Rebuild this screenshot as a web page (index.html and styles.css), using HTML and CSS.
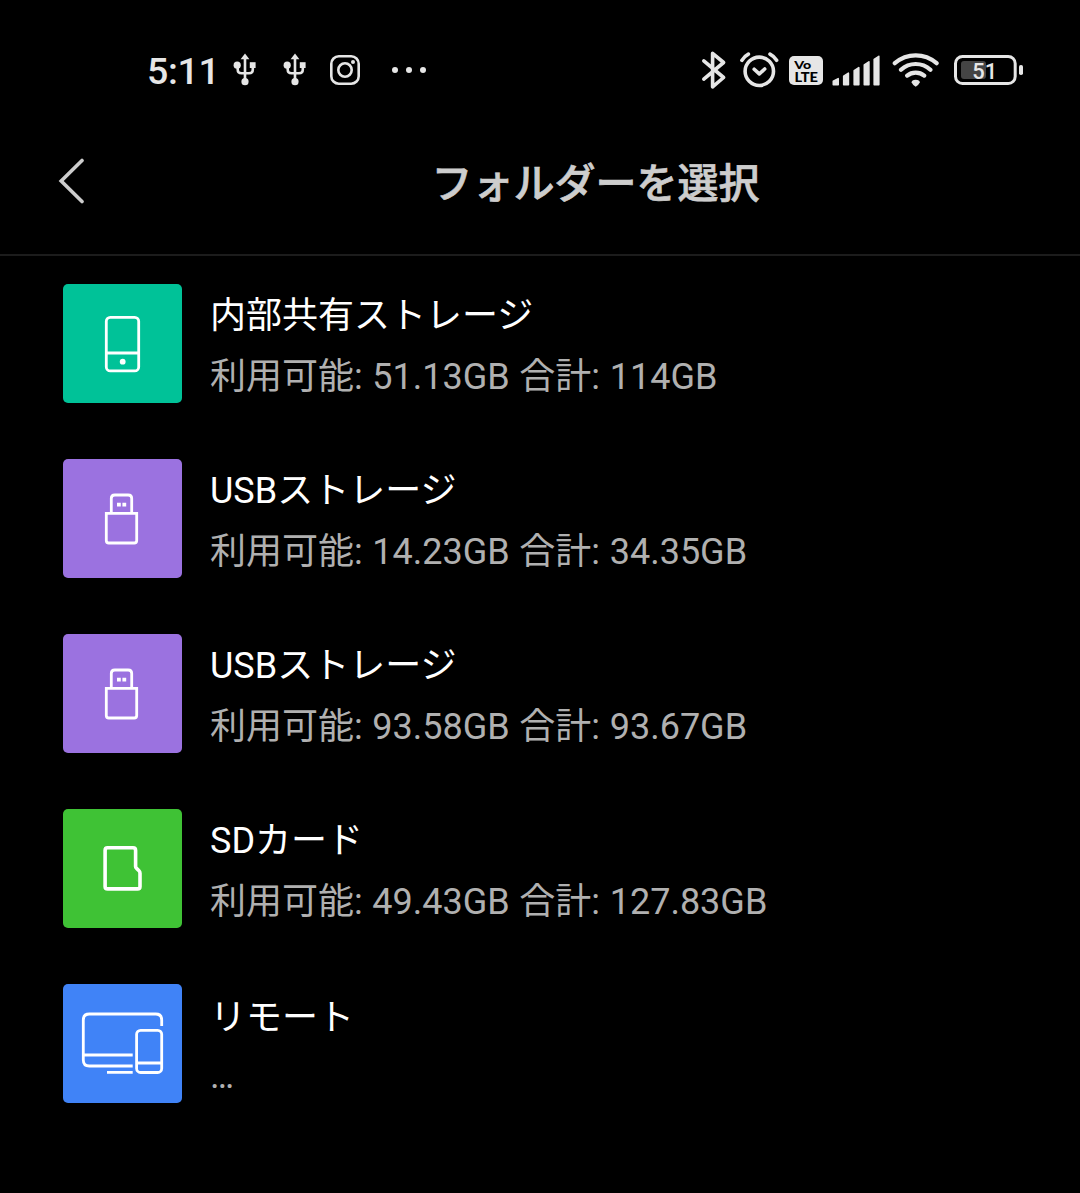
FILE: index.html
```html
<!DOCTYPE html>
<html lang="ja">
<head>
    <meta charset="UTF-8">
    <meta name="viewport" content="width=device-width, initial-scale=1.0">
    <title>フォルダーを選択</title>
    <link rel="stylesheet" href="styles.css">
</head>
<body>

<div class="status-bar">
    <span class="time">5:11</span>
    <div class="notifications">
        <svg class="usb" width="24" height="40" viewBox="0 0 24 40">
            <path class="solid" d="M12 3.6L16.4 9.3H7.6Z"/>
            <path class="line" d="M12 7V31M4.7 15V19.5Q4.7 23.3 8.5 23.3H16Q19.8 23.3 19.8 19.5V15"/>
            <circle class="solid" cx="4.2" cy="15.2" r="3.6"/>
            <rect class="solid" x="16.8" y="12.2" width="5.8" height="5.8"/>
            <circle class="solid" cx="12" cy="31.7" r="3.6"/>
        </svg>
        <svg class="usb" width="24" height="40" viewBox="0 0 24 40">
            <path class="solid" d="M12 3.6L16.4 9.3H7.6Z"/>
            <path class="line" d="M12 7V31M4.7 15V19.5Q4.7 23.3 8.5 23.3H16Q19.8 23.3 19.8 19.5V15"/>
            <circle class="solid" cx="4.2" cy="15.2" r="3.6"/>
            <rect class="solid" x="16.8" y="12.2" width="5.8" height="5.8"/>
            <circle class="solid" cx="12" cy="31.7" r="3.6"/>
        </svg>
        <svg class="instagram" width="30" height="40" viewBox="0 0 30 40">
            <rect class="line" x="1.3" y="6.3" width="27.4" height="27.4" rx="7.5"/>
            <circle class="line" cx="15" cy="20" r="6.7"/>
            <circle class="solid" cx="23" cy="12" r="2"/>
        </svg>
        <svg class="more" width="36" height="40" viewBox="0 0 36 40">
            <circle class="solid" cx="4" cy="20" r="3"/>
            <circle class="solid" cx="18" cy="20" r="3"/>
            <circle class="solid" cx="32" cy="20" r="3"/>
        </svg>
    </div>
    <div class="system">
        <svg class="bluetooth" width="26" height="40" viewBox="0 0 26 40">
            <path class="line thick" d="M2.8 10.8L22.6 27.5L11.6 36.8V3.4L22.6 12.5L2.8 29.2"/>
        </svg>
        <svg class="alarm" width="40" height="40" viewBox="0 0 40 40">
            <circle class="line thick" cx="20.3" cy="21.3" r="14.2"/>
            <path class="line thick" d="M15.2 19.2L20.3 23.9L25.7 19M2.9 10.3Q5.2 6.4 9.4 4.2M31 4.2Q35.2 6.4 37.6 10.3"/>
        </svg>
        <svg class="volte" width="34" height="40" viewBox="0 0 34 40">
            <rect class="solid" x="0" y="6" width="34" height="29" rx="5"/>
            <text x="5.3" y="19" font-size="11.8" textLength="17" lengthAdjust="spacingAndGlyphs">Vo</text>
            <text x="5.4" y="31.5" font-size="12.8" textLength="23.6" lengthAdjust="spacingAndGlyphs">LTE</text>
        </svg>
        <svg class="signal" width="48" height="40" viewBox="0 0 48 40">
            <path class="bar" d="M1.3 31.3L6.2 28.7V34.8H1.3ZM11.7 26.2L16.4 23.2V34.8H11.7ZM22.2 20.7L26.8 17.6V34.8H22.2ZM32.3 15L36.9 11.8V34.8H32.3ZM42.2 9.3L46.8 6.3V34.8H42.2Z"/>
        </svg>
        <svg class="wifi" width="48" height="40" viewBox="0 0 48 40">
            <path class="line arc" d="M2.8 13.2Q12 5.4 23.7 5.4T44.6 13.2M9 19.8Q15.2 14 23.7 14T38.4 19.8M15.2 25.6Q18.8 22.6 23.7 22.6T32.2 25.6"/>
            <path class="solid" d="M19.6 32.6Q19.6 29.8 23.7 29.8T27.8 32.6Q27 34.6 23.7 36.8Q20.4 34.6 19.6 32.6Z"/>
        </svg>
        <svg class="battery" width="70" height="40" viewBox="0 0 70 40">
            <rect class="charge" x="7" y="11" width="25" height="18" rx="3"/>
            <rect class="line frame" x="1.5" y="6.5" width="59.7" height="27" rx="7"/>
            <rect class="solid" x="65" y="15" width="4" height="10" rx="1.8"/>
            <text class="level" x="18.3" y="28.9">51</text>
        </svg>
    </div>
</div>

<header class="header">
    <button class="back" aria-label="戻る">
        <svg width="30" height="46" viewBox="0 0 30 46">
            <path d="M24 2.5L3.2 23L24 43.5"/>
        </svg>
    </button>
    <h1>フォルダーを選択</h1>
</header>

<ul class="storage-list">
    <li class="storage">
        <svg class="tile internal" viewBox="0 0 119 119">
            <rect x="43.3" y="33.3" width="32.4" height="53.6" rx="4"/>
            <path d="M43.3 69H75.7"/>
            <circle class="dot" cx="59.7" cy="77.7" r="2.9"/>
        </svg>
        <div class="info">
            <p class="name">内部共有ストレージ</p>
            <p class="space">利用可能: 51.13GB 合計: 114GB</p>
        </div>
    </li>
    <li class="storage">
        <svg class="tile usb-drive" viewBox="0 0 119 119">
            <path d="M48.3 54V39.5Q48.3 36 51.8 36H65.2Q68.7 36 68.7 39.5V54"/>
            <path d="M43.3 54.3H73.7V81.5Q73.7 84 71.2 84H45.8Q43.3 84 43.3 81.5Z"/>
            <path class="dot" d="M54 43.7h3.8v3.8h-3.8zM59.4 43.7h3.8v3.8h-3.8z"/>
        </svg>
        <div class="info">
            <p class="name">USBストレージ</p>
            <p class="space">利用可能: 14.23GB 合計: 34.35GB</p>
        </div>
    </li>
    <li class="storage">
        <svg class="tile usb-drive" viewBox="0 0 119 119">
            <path d="M48.3 54V39.5Q48.3 36 51.8 36H65.2Q68.7 36 68.7 39.5V54"/>
            <path d="M43.3 54.3H73.7V81.5Q73.7 84 71.2 84H45.8Q43.3 84 43.3 81.5Z"/>
            <path class="dot" d="M54 43.7h3.8v3.8h-3.8zM59.4 43.7h3.8v3.8h-3.8z"/>
        </svg>
        <div class="info">
            <p class="name">USBストレージ</p>
            <p class="space">利用可能: 93.58GB 合計: 93.67GB</p>
        </div>
    </li>
    <li class="storage">
        <svg class="tile sd-card" viewBox="0 0 119 119">
            <path d="M44.6 38.8H70Q72.6 38.8 72.6 41.4V57.5Q72.6 58.6 73.6 59.4L76 61.7Q77 62.7 77 64.2V77.4Q77 79.9 74.5 79.9H44.6Q42.1 79.9 42.1 77.4V41.4Q42.1 38.8 44.6 38.8Z"/>
        </svg>
        <div class="info">
            <p class="name">SDカード</p>
            <p class="space">利用可能: 49.43GB 合計: 127.83GB</p>
        </div>
    </li>
    <li class="storage">
        <svg class="tile remote" viewBox="0 0 119 119">
            <path d="M98.7 42V36Q98.7 30 92.7 30H26.3Q20.3 30 20.3 36V76Q20.3 82 26.3 82H69.7M20.3 71H69.7M44 88.3H69.7"/>
            <rect x="73.6" y="46.3" width="25.1" height="42.2" rx="4"/>
            <path d="M73.6 79H98.7"/>
        </svg>
        <div class="info pending">
            <p class="name">リモート</p>
            <p class="space">…</p>
        </div>
    </li>
</ul>

</body>
</html>
```
FILE: styles.css
```css
:root {
    --background-color: #000;
    --status-color: #e6e6e6;
    --title-color: #cdcdcd;
    --name-color: #fff;
    --space-color: #b0b0b0;
    --divider-color: #1c1c1c;
}

* {
    box-sizing: border-box;
}

body {
    margin: 0;
    min-height: 100vh;
    background-color: var(--background-color);
    font-family: Roboto, "Noto Sans CJK JP", sans-serif;
}

/* Status bar */
.status-bar {
    display: flex;
    align-items: center;
    height: 140px;
    padding: 0 56px 0 147px;
    color: var(--status-color);
}

.time {
    width: 86px;
    padding-top: 2px;
    font-size: 37.5px;
    font-weight: 500;
    line-height: 40px;
    letter-spacing: -0.3px;
    white-space: nowrap;
}

.notifications,
.system {
    display: flex;
    align-items: center;
}

.system {
    margin-left: auto;
}

.status-bar svg {
    display: block;
}

.usb {
    margin-right: 26px;
}

.instagram {
    margin-left: -3px;
    margin-right: 31px;
}

.bluetooth {
    margin-right: 12px;
}

.alarm {
    margin-right: 10px;
}

.volte {
    margin-right: 9px;
}

.signal {
    margin-right: 12px;
}

.wifi {
    margin-right: 14px;
}

.solid {
    fill: var(--status-color);
}

.line {
    fill: none;
    stroke: var(--status-color);
    stroke-width: 2.6;
}

.thick {
    stroke-width: 3.6;
    stroke-linecap: round;
    stroke-linejoin: round;
}

.arc {
    stroke-width: 4.2;
    stroke-linecap: round;
}

.frame {
    stroke-width: 3;
}

.bar {
    fill: var(--status-color);
    stroke: var(--status-color);
    stroke-width: 1.6;
    stroke-linejoin: round;
}

.charge {
    fill: #444;
}

.volte text {
    font-family: Lato, sans-serif;
    font-weight: 900;
    fill: #000;
}

.level {
    font-size: 22px;
    font-weight: 500;
    fill: var(--status-color);
}

/* Header */
.header {
    display: flex;
    align-items: center;
    height: 116px;
    padding-bottom: 32px;
    border-bottom: 2px solid var(--divider-color);
}

.back {
    width: 114px;
    padding: 0 0 0 58px;
    border: none;
    background: none;
    cursor: pointer;
}

.back svg {
    display: block;
    fill: none;
    stroke: var(--title-color);
    stroke-width: 3.6;
    stroke-linecap: round;
}

h1 {
    flex: 1;
    margin: 0;
    padding: 5px 3px 0 0;
    font-size: 41px;
    font-weight: 500;
    line-height: 60px;
    text-align: center;
    color: var(--title-color);
    -webkit-text-stroke: 0.7px var(--title-color);
}

/* Storage list */
.storage-list {
    display: flex;
    flex-direction: column;
    gap: 56px;
    margin: 0;
    padding: 28px 63px;
    list-style: none;
}

.storage {
    display: flex;
    gap: 28px;
    height: 119px;
}

.tile {
    flex: none;
    width: 119px;
    height: 119px;
    border-radius: 5px;
    fill: none;
    stroke: #fff;
    stroke-width: 2.8;
}

.tile .dot {
    fill: #fff;
    stroke: none;
}

.internal {
    background-color: #00c298;
}

.usb-drive {
    background-color: #9b72e0;
}

.sd-card {
    background-color: #3fc235;
    stroke-width: 3.6;
}

.remote {
    background-color: #4083f7;
}

.info {
    padding-top: 1px;
    font-size: 36px;
    white-space: nowrap;
}

.info p {
    margin: 0;
    height: 61px;
    line-height: 62px;
}

.name {
    color: var(--name-color);
}

.space {
    color: var(--space-color);
    word-spacing: 0.7px;
}

.pending {
    padding-top: 3px;
}

.info.pending .name {
    height: 58px;
}
```
